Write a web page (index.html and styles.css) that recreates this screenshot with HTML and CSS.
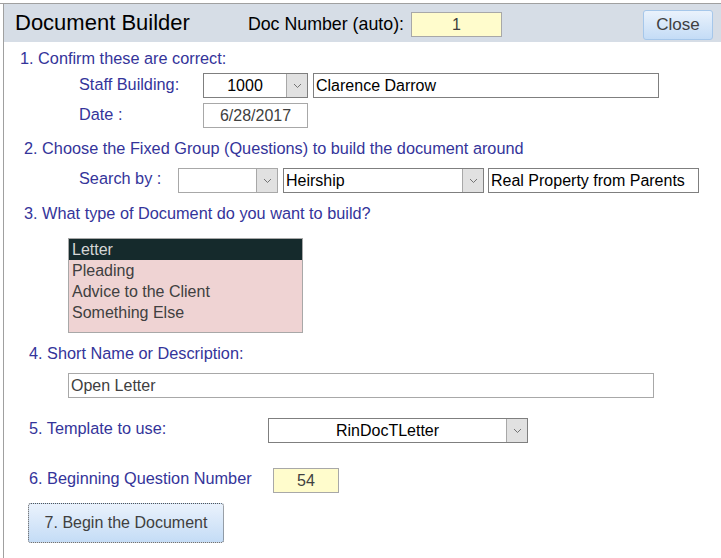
FILE: index.html
```html
<!DOCTYPE html>
<html lang="en">
<head>
    <meta charset="UTF-8">
    <title>Document Builder</title>
    <link rel="stylesheet" href="styles.css">
</head>
<body>
    <div class="tabs"></div>

    <div class="window">

        <div class="header">
            <span class="title">Document Builder</span>
            <span class="doc-label">Doc Number (auto):</span>
            <div class="box box-yellow box-doc">1</div>
            <button type="button" class="btn btn-close">Close</button>
        </div>

        <div class="step step-1">1. Confirm these are correct:</div>
        <div class="row row-staff">
            <span class="field-label label-wide">Staff Building:</span>
            <div class="combo combo-staff"><span class="combo-text center dark">1000</span><span class="drop"><svg width="9" height="6" viewBox="0 0 9 6"><path d="M1 1 L4.5 4.5 L8 1" fill="none" stroke="#666" stroke-width="0.9"/></svg></span></div>
            <div class="box box-dark box-name">Clarence Darrow</div>
        </div>
        <div class="row row-date">
            <span class="field-label label-wide">Date :</span>
            <div class="box box-date center">6/28/2017</div>
        </div>

        <div class="step step-2">2. Choose the Fixed Group (Questions) to build the document around</div>
        <div class="row row-search">
            <span class="field-label label-search">Search by :</span>
            <div class="combo combo-search"><span class="combo-text"></span><span class="drop"><svg width="9" height="6" viewBox="0 0 9 6"><path d="M1 1 L4.5 4.5 L8 1" fill="none" stroke="#666" stroke-width="0.9"/></svg></span></div>
            <div class="combo combo-group"><span class="combo-text dark">Heirship</span><span class="drop"><svg width="9" height="6" viewBox="0 0 9 6"><path d="M1 1 L4.5 4.5 L8 1" fill="none" stroke="#666" stroke-width="0.9"/></svg></span></div>
            <div class="box box-dark box-question">Real Property from Parents</div>
        </div>

        <div class="step step-3">3. What type of Document do you want to build?</div>
        <ul class="listbox">
            <li class="selected">Letter</li>
            <li>Pleading</li>
            <li>Advice to the Client</li>
            <li>Something Else</li>
        </ul>

        <div class="step step-4">4. Short Name or Description:</div>
        <div class="box box-short">Open Letter</div>

        <div class="row row-template">
            <span class="field-label label-template">5. Template to use:</span>
            <div class="combo combo-template"><span class="combo-text center dark">RinDocTLetter</span><span class="drop"><svg width="9" height="6" viewBox="0 0 9 6"><path d="M1 1 L4.5 4.5 L8 1" fill="none" stroke="#666" stroke-width="0.9"/></svg></span></div>
        </div>

        <div class="row row-question">
            <span class="field-label label-question">6. Beginning Question Number</span>
            <div class="box box-yellow box-number">54</div>
        </div>

        <button type="button" class="btn btn-begin">7. Begin the Document</button>

    </div>
</body>
</html>
```

FILE: styles.css
```css
body{
    margin: 0;
    font-family: "Liberation Sans", Arial, sans-serif;
    font-size: 16px;
    background-color: white;
    color: #404040;
}

.tabs{
    height: 3px;
    border-bottom: 1px solid #a0a0a0;
}

.window{
    margin-left: 3px;
    border-left: 1px solid #a0a0a0;
    height: 554px;
}

/* cabecalho */
.header{
    height: 38px;
    background-color: #d6dde6;
    display: flex;
    align-items: center;
}

.title{
    margin-left: 11px;
    font-size: 22px;
    color: black;
    margin-top: -1px;
}

.doc-label{
    margin-left: 58px;
    font-size: 17.8px;
    color: black;
    margin-top: 3px;
}

.box{
    box-sizing: border-box;
    height: 25px;
    line-height: 23px;
    border: 1px solid #a8a8a8;
    background-color: white;
    padding: 0 2px;
    white-space: nowrap;
    overflow: hidden;
}

.box-dark{
    border-color: #7f7f7f;
    color: black;
}

.box-yellow{
    background-color: #fffccc;
    text-align: center;
}

.box-doc{
    width: 91px;
    margin-left: 7px;
    margin-top: 3px;
}

.btn{
    font-family: "Liberation Sans", Arial, sans-serif;
    font-size: 16px;
    color: #404040;
    border-radius: 3px;
    background: linear-gradient(to bottom, #eaf2fc, #c4dcf6);
    padding: 0;
    cursor: pointer;
}

.btn-close{
    margin-left: auto;
    margin-right: 8px;
    margin-top: 4px;
    width: 70px;
    height: 30px;
    font-size: 17px;
    border: 1px solid #a6c7ea;
}

/* passos */
.step{
    height: 20px;
    line-height: 20px;
    font-size: 16.3px;
    color: #34349a;
}

.step-1{ margin: 6px 0 0 16px; }
.step-2{ margin: 10px 0 0 20px; }
.step-3{ margin: 10px 0 0 20px; }
.step-4{ margin: 10px 0 0 25px; }

.row{
    display: flex;
    align-items: center;
    height: 25px;
}

.row-staff{ margin: 5px 0 0 75px; }
.row-date{ margin: 5px 0 0 75px; }
.row-search{ margin: 10px 0 0 75px; }
.row-template{ margin: 20px 0 0 25px; }
.row-question{ margin: 25px 0 0 25px; }

.field-label{
    color: #34349a;
    font-size: 16.3px;
    flex-shrink: 0;
}

.label-wide{ width: 124px; margin-top: -2px; }
.label-search{ width: 99px; margin-top: -4px; }
.label-template{ width: 239px; margin-top: -4px; }
.label-question{ width: 244px; margin-top: -5px; }

.center{ text-align: center; }
.dark{ color: black; }

/* combos */
.combo{
    box-sizing: border-box;
    height: 25px;
    border: 1px solid #a8a8a8;
    display: flex;
    background-color: white;
}

.combo-text{
    flex: 1;
    line-height: 23px;
    padding: 0 2px;
    white-space: nowrap;
}

.drop{
    width: 20px;
    background-color: #e1e1e1;
    border-left: 1px solid #a8a8a8;
    display: flex;
    align-items: center;
    justify-content: center;
}

.combo-staff{ width: 105px; border-color: #7f7f7f; }
.box-name{ width: 346px; margin-left: 5px; }
.box-date{ width: 105px; }

.combo-search{ width: 100px; }
.combo-group{ width: 201px; margin-left: 5px; border-color: #7f7f7f; }
.box-question{ width: 211px; margin-left: 4px; }

.combo-template{ width: 260px; border-color: #7f7f7f; }

/* lista */
.listbox{
    box-sizing: border-box;
    list-style: none;
    width: 235px;
    height: 95px;
    margin: 15px 0 0 64px;
    padding: 0;
    border: 1px solid #a8a8a8;
    background-color: #efd3d3;
}

.listbox li{
    height: 21px;
    line-height: 21px;
    padding-left: 3px;
}

.listbox .selected{
    background-color: #152a2c;
    color: #d6d6d6;
}

.box-short{
    width: 586px;
    margin: 10px 0 0 64px;
}

.box-number{ width: 66px; }

.btn-begin{
    display: block;
    box-sizing: border-box;
    width: 196px;
    height: 40px;
    margin: 10px 0 0 24px;
    border: 1px dotted #555;
}
```
